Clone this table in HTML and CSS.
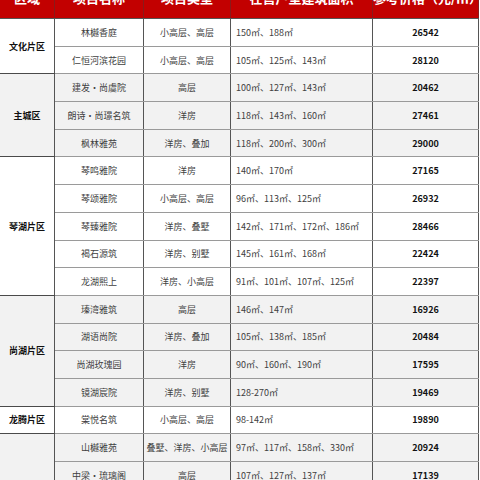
FILE: index.html
```html
<!DOCTYPE html>
<html lang="zh-CN">
<head>
<meta charset="utf-8">
<title>楼盘参考价格</title>
<link rel="stylesheet" href="styles.css">
</head>
<body>
<table class="price-table">
  <colgroup>
    <col class="c-area"><col class="c-name"><col class="c-type"><col class="c-size"><col class="c-price">
  </colgroup>
  <thead>
    <tr><th>区域</th><th>项目名称</th><th>项目类型</th><th>在售户型建筑面积</th><th>参考价格（元/㎡）</th></tr>
  </thead>
  <tbody class="grp white">
    <tr><td class="region" rowspan="2">文化片区</td><td>林樾香庭</td><td>小高层、高层</td><td class="size">150㎡、188㎡</td><td class="price">26542</td></tr>
    <tr><td>仁恒河滨花园</td><td>小高层、高层</td><td class="size">105㎡、125㎡、143㎡</td><td class="price">28120</td></tr>
  </tbody>
  <tbody class="grp gray">
    <tr><td class="region" rowspan="3">主城区</td><td>建发·尚虞院</td><td>高层</td><td class="size">100㎡、127㎡、143㎡</td><td class="price">20462</td></tr>
    <tr><td>朗诗·尚璟名筑</td><td>洋房</td><td class="size">118㎡、143㎡、160㎡</td><td class="price">27461</td></tr>
    <tr><td>枫林雅苑</td><td>洋房、叠加</td><td class="size">118㎡、200㎡、300㎡</td><td class="price">29000</td></tr>
  </tbody>
  <tbody class="grp white">
    <tr><td class="region" rowspan="5">琴湖片区</td><td>琴鸣雅院</td><td>洋房</td><td class="size">140㎡、170㎡</td><td class="price">27165</td></tr>
    <tr><td>琴颂雅院</td><td>小高层、高层</td><td class="size">96㎡、113㎡、125㎡</td><td class="price">26932</td></tr>
    <tr><td>琴臻雅院</td><td>洋房、叠墅</td><td class="size">142㎡、171㎡、172㎡、186㎡</td><td class="price">28466</td></tr>
    <tr><td>褐石源筑</td><td>洋房、别墅</td><td class="size">145㎡、161㎡、168㎡</td><td class="price">22424</td></tr>
    <tr><td>龙湖熙上</td><td>洋房、小高层</td><td class="size">91㎡、101㎡、107㎡、125㎡</td><td class="price">22397</td></tr>
  </tbody>
  <tbody class="grp gray">
    <tr><td class="region" rowspan="4">尚湖片区</td><td>瑧湾雅筑</td><td>高层</td><td class="size">146㎡、147㎡</td><td class="price">16926</td></tr>
    <tr><td>湖语尚院</td><td>洋房、叠加</td><td class="size">105㎡、138㎡、185㎡</td><td class="price">20484</td></tr>
    <tr><td>尚湖玫瑰园</td><td>洋房</td><td class="size">90㎡、160㎡、190㎡</td><td class="price">17595</td></tr>
    <tr><td>镜湖宸院</td><td>洋房、别墅</td><td class="size">128-270㎡</td><td class="price">19469</td></tr>
  </tbody>
  <tbody class="grp white">
    <tr><td class="region">龙腾片区</td><td>棠悦名筑</td><td>小高层、高层</td><td class="size">98-142㎡</td><td class="price">19890</td></tr>
  </tbody>
  <tbody class="grp gray">
    <tr><td class="region" rowspan="2"></td><td>山樾雅苑</td><td>叠墅、洋房、小高层</td><td class="size">97㎡、117㎡、158㎡、330㎡</td><td class="price">20924</td></tr>
    <tr><td>中梁·琉璃阁</td><td>高层</td><td class="size">107㎡、127㎡、137㎡</td><td class="price">17139</td></tr>
  </tbody>
</table>
</body>
</html>
```
FILE: styles.css
```css
html, body {
  margin: 0;
  padding: 0;
  background: #ffffff;
  overflow: hidden;
}
body {
  font-family: "Noto Sans CJK SC", "Noto Sans", sans-serif;
}
.price-table {
  border-collapse: collapse;
  table-layout: fixed;
  width: 479px;
  margin-top: -24px;
  margin-left: -1px;
}
.c-area { width: 55px; }
.c-name { width: 89px; }
.c-type { width: 87px; }
.c-size { width: 142px; }
.c-price { width: 106px; }

.price-table th {
  background: #c20000;
  color: #ffffff;
  font-size: 13px;
  font-weight: 700;
  height: 42px;
  padding: 0;
  text-align: center;
  border-left: 1px solid #8a1a1a;
  border-right: 1px solid #8a1a1a;
  border-bottom: 1px solid #555555;
}
.price-table td {
  height: 26.7px;
  padding: 0;
  font-size: 9px;
  color: #404040;
  text-align: center;
  vertical-align: middle;
  white-space: nowrap;
  border: 1px solid #555555;
  border-top: 1px solid #9a9a9a;
  border-bottom: 1px solid #9a9a9a;
}
.grp.gray td { background: #f2f2f2; }
.grp.white td { background: #ffffff; }
.grp tr:first-child td { border-top: 1.5px solid #4a4a4a; }
.price-table td.region {
  font-weight: 700;
  color: #111111;
  border-top: 1.5px solid #4a4a4a;
  border-bottom: 1.5px solid #4a4a4a;
}
.price-table td.size {
  text-align: left;
  padding-left: 5px;
}
.price-table td.price {
  font-weight: 700;
  color: #111111;
}
```
